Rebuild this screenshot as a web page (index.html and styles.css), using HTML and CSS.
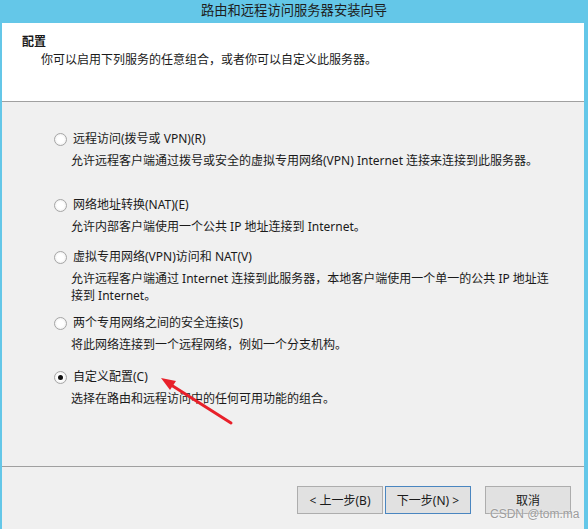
FILE: index.html
```html
<!DOCTYPE html>
<html lang="zh-CN">
<head>
  <meta charset="UTF-8">
  <title>路由和远程访问服务器安装向导</title>
  <link rel="stylesheet" href="styles.css">
</head>
<body>
  <div class="window">
    <!-- Title bar -->
    <div class="titlebar">路由和远程访问服务器安装向导</div>

    <div class="frame">
      <!-- Wizard header -->
      <div class="header">
        <div class="header-title">配置</div>
        <div class="header-sub">你可以启用下列服务的任意组合，或者你可以自定义此服务器。</div>
      </div>

      <!-- Options -->
      <div class="content">
        <div class="option opt-1">
          <div class="option-label"><span class="radio"></span>远程访问(拨号或 VPN)(R)</div>
          <div class="option-desc">允许远程客户端通过拨号或安全的虚拟专用网络(VPN) Internet 连接来连接到此服务器。</div>
        </div>
        <div class="option opt-2">
          <div class="option-label"><span class="radio"></span>网络地址转换(NAT)(E)</div>
          <div class="option-desc">允许内部客户端使用一个公共 IP 地址连接到 Internet。</div>
        </div>
        <div class="option opt-3">
          <div class="option-label"><span class="radio"></span>虚拟专用网络(VPN)访问和 NAT(V)</div>
          <div class="option-desc">允许远程客户端通过 Internet 连接到此服务器，本地客户端使用一个单一的公共 IP 地址连<br>接到 Internet。</div>
        </div>
        <div class="option opt-4">
          <div class="option-label"><span class="radio"></span>两个专用网络之间的安全连接(S)</div>
          <div class="option-desc">将此网络连接到一个远程网络，例如一个分支机构。</div>
        </div>
        <div class="option opt-5">
          <div class="option-label"><span class="radio checked"></span>自定义配置(C)</div>
          <div class="option-desc">选择在路由和远程访问中的任何可用功能的组合。</div>
        </div>
      </div>

      <!-- Buttons -->
      <div class="footer">
        <button class="btn">&lt; 上一步(B)</button>
        <button class="btn btn-default">下一步(N) &gt;</button>
        <button class="btn btn-cancel">取消</button>
      </div>
    </div>

    <!-- Red annotation arrow -->
    <svg class="arrow" width="588" height="529" viewBox="0 0 588 529">
      <line x1="231" y1="423" x2="168" y2="383" stroke="#e8202a" stroke-width="3" stroke-linecap="round"/>
      <polygon points="161,378 176,381 170,390" fill="#e8202a"/>
    </svg>

    <div class="watermark">CSDN @tom.ma</div>
  </div>
</body>
</html>
```

FILE: styles.css
```css
body {
  margin: 0;
  padding: 0;
  font-family: "Noto Sans", "Noto Sans CJK SC", sans-serif;
  font-size: 12px;
  color: #1a1a1a;
}
.window {
  position: relative;
  width: 588px;
  height: 529px;
  overflow: hidden;
  display: flex;
  flex-direction: column;
  background-color: #64c7e8;
}
.titlebar {
  height: 23px;
  line-height: 21px;
  text-align: center;
  font-size: 13.3px;
  color: #1e1e1e;
}
.frame {
  flex: 1;
  margin: 0 4px 0 2px;
  display: flex;
  flex-direction: column;
  background-color: #f0f0f0;
}
.header {
  height: 78px;
  box-sizing: border-box;
  padding: 10px 0 0 20px;
  background-color: #fff;
  border-bottom: 1px solid #a0a0a0;
  height: 79px;
  line-height: 17px;
}
.header-title {
  font-weight: bold;
}
.header-sub {
  margin-top: 1px;
  padding-left: 19px;
}
.content {
  height: 365px;
  box-sizing: border-box;
  padding: 28px 0 0 52px;
  border-bottom: 1px solid #a0a0a0;
}
.option-label {
  display: flex;
  align-items: center;
  line-height: 18px;
}
.option-desc {
  margin: 4px 0 0 17px;
  line-height: 17px;
}
.opt-2 { margin-top: 27px; }
.opt-3 { margin-top: 13px; }
.opt-4 { margin-top: 10px; }
.opt-5 { margin-top: 15px; }
.radio {
  width: 11px;
  height: 11px;
  margin-right: 6px;
  border: 1px solid #a6a6a6;
  border-radius: 50%;
  background: radial-gradient(circle, #ffffff 40%, #e6e6e6 100%);
  display: flex;
  align-items: center;
  justify-content: center;
}
.radio.checked::after {
  content: "";
  width: 5px;
  height: 5px;
  border-radius: 50%;
  background-color: #111;
}
.footer {
  flex: 1;
  display: flex;
  align-items: flex-start;
  justify-content: flex-end;
  padding: 19px 13px 0 0;
}
.btn {
  width: 86px;
  height: 28px;
  margin-left: 2px;
  padding: 0;
  font-family: "Noto Sans", "Noto Sans CJK SC", sans-serif;
  font-size: 12px;
  color: #1a1a1a;
  background-color: #e1e1e1;
  border: 1px solid #adadad;
}
.btn-default {
  border-color: #4a86c0;
}
.btn-cancel {
  margin-left: 14px;
}
.arrow {
  position: absolute;
  left: 0;
  top: 0;
  pointer-events: none;
}
.watermark {
  position: absolute;
  left: 490px;
  top: 507px;
  font-family: "Liberation Sans", Arial, sans-serif;
  font-size: 12px;
  color: #9c9c9c;
  text-shadow: 0 0 2px #fff;
}
```
